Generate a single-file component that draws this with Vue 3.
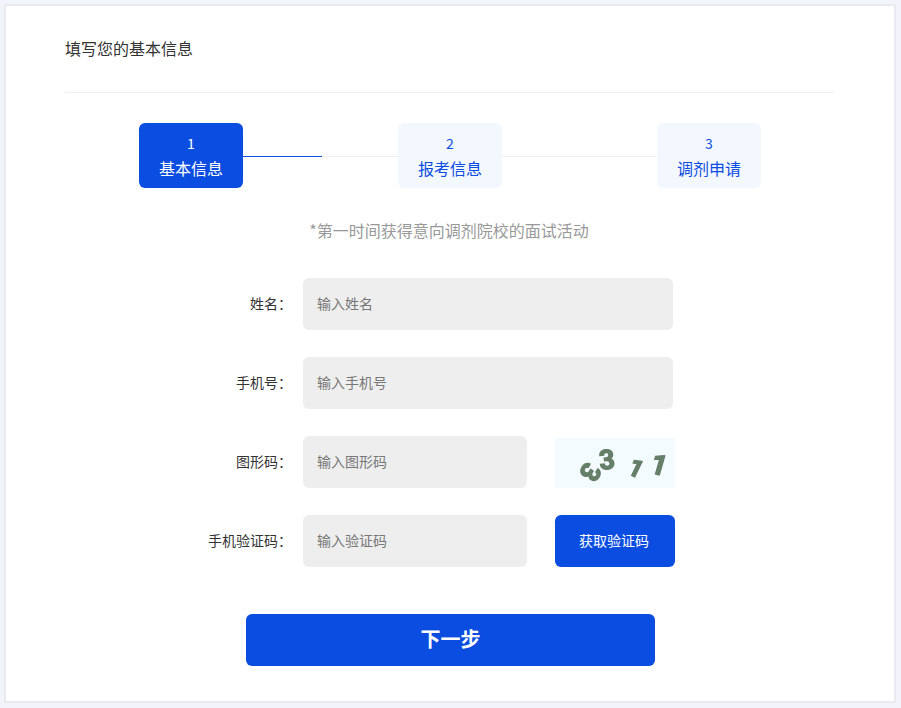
<script setup>
const steps = [
  { no: 1, name: '基本信息', active: true },
  { no: 2, name: '报考信息', active: false },
  { no: 3, name: '调剂申请', active: false },
]
const rows = [
  { label: '姓名：', placeholder: '输入姓名' },
  { label: '手机号：', placeholder: '输入手机号' },
  { label: '图形码：', placeholder: '输入图形码', kind: 'captcha' },
  { label: '手机验证码：', placeholder: '输入验证码', kind: 'sms' },
]
</script>

<template>
  <main class="card">
    <h1 class="title">填写您的基本信息</h1>

    <ol class="steps">
      <template v-for="(step, i) in steps" :key="step.no">
        <li class="step" :class="{ active: step.active }">
          <span class="no">{{ step.no }}</span>
          <span class="name">{{ step.name }}</span>
        </li>
        <li v-if="i < steps.length - 1" class="line" :class="{ half: step.active }" aria-hidden="true"></li>
      </template>
    </ol>

    <p class="tip">*第一时间获得意向调剂院校的面试活动</p>

    <form class="form" @submit.prevent>
      <div v-for="row in rows" :key="row.label" class="row">
        <label class="label">{{ row.label }}</label>
        <input class="input" :class="{ short: row.kind }" type="text" :placeholder="row.placeholder" />
        <svg v-if="row.kind === 'captcha'" class="captcha" width="120" height="50" viewBox="0 0 120 50" role="img" aria-label="3 3 1 1">
          <rect width="120" height="50" fill="#f4fbfe" />
          <g class="captcha-text" filter="url(#soft)" text-anchor="middle" dominant-baseline="central">
            <text transform="translate(35 34) rotate(-240)" font-size="27">3</text>
            <text transform="translate(52 22) rotate(-6)" font-size="27">3</text>
            <text transform="translate(81 30.5) rotate(26)" font-size="24">1</text>
            <text transform="translate(104 27) rotate(16)" font-size="28">1</text>
          </g>
          <defs>
            <filter id="soft" x="-10%" y="-10%" width="120%" height="120%">
              <feGaussianBlur stdDeviation="0.55" />
            </filter>
          </defs>
        </svg>
        <button v-if="row.kind === 'sms'" class="sms" type="button">获取验证码</button>
      </div>
      <button class="next" type="submit">下一步</button>
    </form>
  </main>
</template>

<style scoped>
.card {
  box-sizing: border-box;
  width: 892px;
  height: 699px;
  margin: 4px 0 0 4px;
  padding: 0 59px;
  background: #fff;
  border: 2px solid #e9eaef;
  font-family: "Noto Sans CJK SC", "Liberation Sans", sans-serif;
  color: #333;
}
.title {
  margin: 0;
  height: 86px;
  line-height: 84px;
  font-size: 16px;
  font-weight: 400;
  border-bottom: 1px solid #eeeeee;
}
.steps {
  display: flex;
  align-items: center;
  width: 622px;
  margin: 30px 0 0 74px;
  padding: 0;
  list-style: none;
}
.step {
  flex: none;
  width: 104px;
  height: 65px;
  padding-top: 9px;
  box-sizing: border-box;
  display: flex;
  flex-direction: column;
  align-items: center;
  border-radius: 6px;
  background: #f3f7fe;
  color: #0a4de0;
}
.step.active {
  background: #0a4de0;
  color: #fff;
}
.no {
  font-size: 14px;
  line-height: 22px;
}
.name {
  font-size: 16px;
  line-height: 28px;
}
.line {
  flex: 1;
  height: 1px;
  margin-top: 1px;
  background: #eeeeee;
}
.line.half {
  background: linear-gradient(to right, #0a4de0 79px, #eeeeee 79px);
}
.tip {
  margin: 29px 2px 0 0;
  text-align: center;
  font-size: 16px;
  line-height: 26px;
  color: #999;
}
.form {
  margin-top: 35px;
  display: flex;
  flex-direction: column;
  gap: 27px;
}
.row {
  display: flex;
  align-items: flex-end;
}
.label {
  flex: none;
  box-sizing: border-box;
  width: 238px;
  padding-right: 11px;
  height: 52px;
  line-height: 50px;
  text-align: right;
  font-size: 14px;
  white-space: nowrap;
}
.input {
  box-sizing: border-box;
  width: 370px;
  height: 52px;
  padding: 0 14px 2px;
  border: 0;
  outline: 0;
  border-radius: 6px;
  background: #eeeeee;
  font: inherit;
  font-size: 14px;
  color: #333;
}
.input::placeholder {
  color: #777;
}
.input.short {
  width: 224px;
}
.captcha {
  flex: none;
  display: block;
  margin-left: 28px;
}
.captcha-text {
  font-family: Roboto, "Liberation Sans", sans-serif;
  font-weight: 700;
  fill: #667f69;
  stroke: #667f69;
  stroke-width: 1.3px;
}
.sms,
.next {
  border: 0;
  border-radius: 6px;
  background: #0a4de0;
  color: #fff;
  font-family: inherit;
  cursor: pointer;
}
.sms {
  flex: none;
  width: 120px;
  height: 52px;
  margin-left: 28px;
  padding: 0 2px 2px 0;
  font-size: 14px;
}
.next {
  width: 409px;
  height: 52px;
  margin: 20px 0 0 181px;
  padding: 0 0 3px;
  font-size: 20px;
  font-weight: 700;
}
</style>

<style>
html, body {
  margin: 0;
  background: #f3f4fb;
}
</style>
